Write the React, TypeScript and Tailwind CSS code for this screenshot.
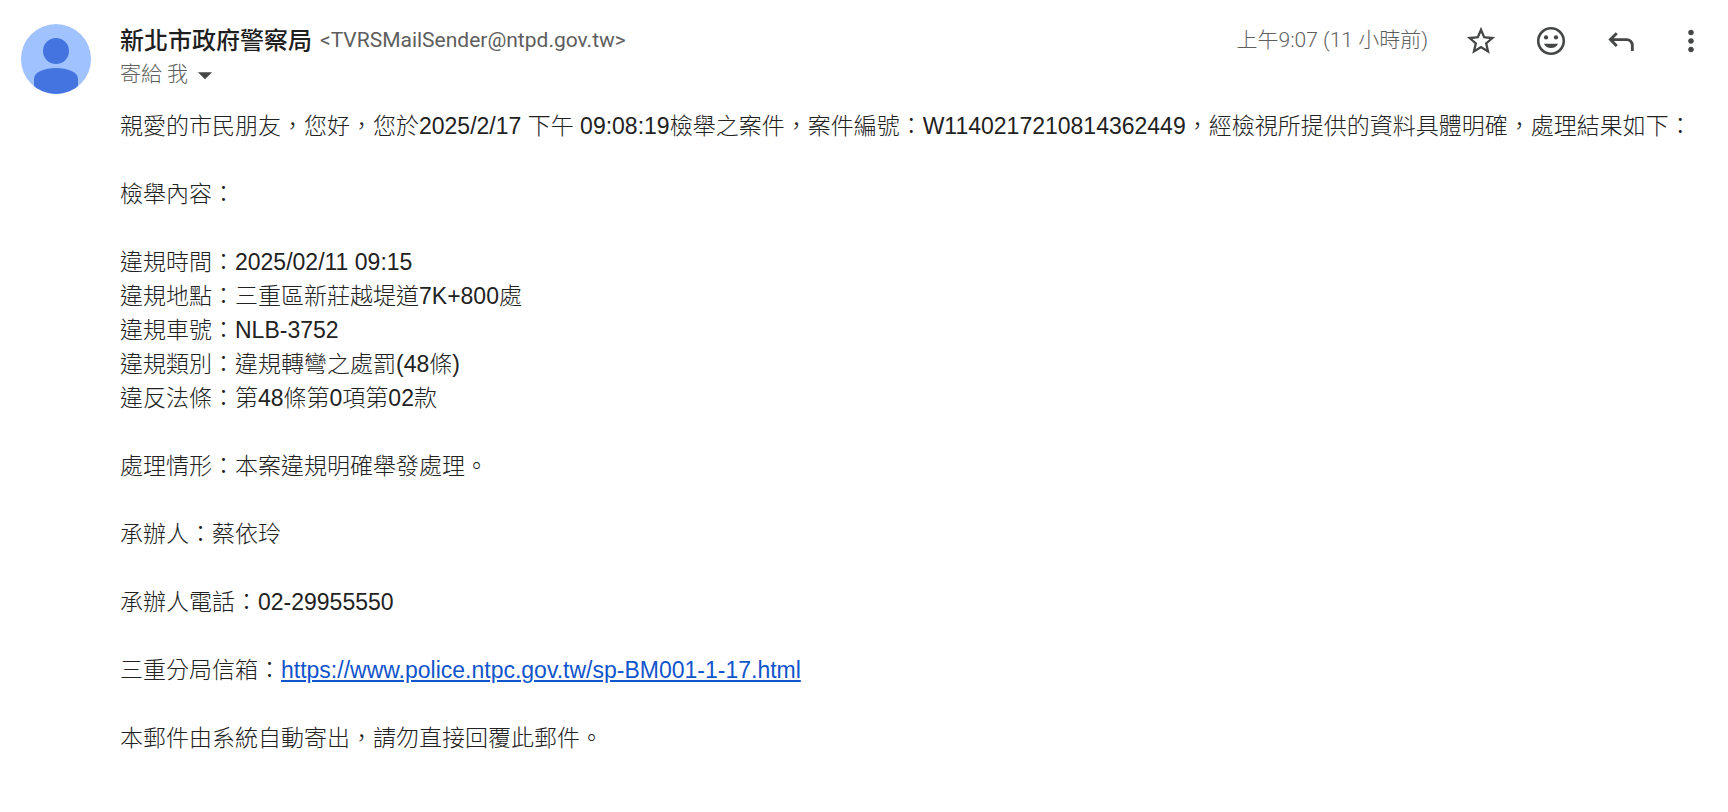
import { MdArrowDropDown, MdMoreVert, MdStarBorder } from "react-icons/md";

const report = [
	"違規時間：2025/02/11 09:15",
	"違規地點：三重區新莊越堤道7K+800處",
	"違規車號：NLB-3752",
	"違規類別：違規轉彎之處罰(48條)",
	"違反法條：第48條第0項第02款",
];

const Avatar = () => (
	<svg viewBox="0 0 70 70" className="size-[70px] shrink-0" aria-hidden="true">
		<clipPath id="avatar">
			<circle cx="35" cy="35" r="35" />
		</clipPath>
		<g clipPath="url(#avatar)">
			<rect width="70" height="70" fill="#a0c2ff" />
			<circle cx="35" cy="27" r="13" fill="#4374e0" />
			<path
				d="M13 70V55c0-7 10-11 22-11s22 4 22 11v15z"
				fill="#4374e0"
			/>
		</g>
	</svg>
);

const SmileIcon = () => (
	<svg viewBox="0 0 24 24" className="size-[34px]" fill="currentColor">
		<circle cx="12" cy="12" r="9" fill="none" stroke="currentColor" strokeWidth="1.8" />
		<circle cx="8.5" cy="9.5" r="1.5" />
		<circle cx="15.5" cy="9.5" r="1.5" />
		<path d="M7 14h10c-.8 1.900-2.700 3-5 3s-4.200-1.100-5-3z" />
	</svg>
);

const ReplyIcon = () => (
	<svg
		viewBox="0 0 24 24"
		className="size-[34px]"
		fill="none"
		stroke="currentColor"
		strokeWidth="2"
	>
		<path d="M9 6.500 4.500 11l4.500 4.500M4.500 11H16a4 4 0 0 1 4 4v4" />
	</svg>
);

const App = () => {
	return (
		<main className="min-h-screen bg-white flex gap-[29px] pt-6 pl-[21px] pr-5 font-light text-[#222222] font-['Liberation_Sans','Noto_Sans_CJK_TC',sans-serif]">
			<Avatar />
			<article className="flex-1 min-w-0">
				<header className="flex items-start justify-between font-['Roboto','Noto_Sans_CJK_TC',sans-serif] text-[21px]">
					<div className="text-[#5e5e5e]">
						<div className="flex items-center gap-2 h-[34px]">
							<h1 className="text-2xl font-medium text-[#1f1f1f]">新北市政府警察局</h1>
							<span className="font-normal">
								&lt;TVRSMailSender@ntpd.gov.tw&gt;
							</span>
						</div>
						<button type="button" className="flex items-center h-[34px] cursor-pointer">
							寄給 我
							<MdArrowDropDown className="text-[34px] text-[#444746]" />
						</button>
					</div>
					<div className="flex items-center gap-9 h-[34px] text-[#444746]">
						<time className="text-[#5e5e5e]">上午9:07 (11 小時前)</time>
						<button type="button" aria-label="加星號" className="cursor-pointer">
							<MdStarBorder className="size-[34px]" />
						</button>
						<button type="button" aria-label="新增表情回應" className="cursor-pointer">
							<SmileIcon />
						</button>
						<button type="button" aria-label="回覆" className="cursor-pointer">
							<ReplyIcon />
						</button>
						<button type="button" aria-label="更多" className="cursor-pointer">
							<MdMoreVert className="size-[34px]" />
						</button>
					</div>
				</header>

				<div className="flex flex-col gap-[34px] mt-[17px] text-[23px] leading-[34px]">
					<p>
						親愛的市民朋友，您好，您於2025/2/17 下午 09:08:19檢舉之案件，案件編號：W1140217210814362449，經檢視所提供的資料具體明確，處理結果如下：
					</p>
					<p>檢舉內容：</p>
					<div>
						{report.map((line) => (
							<p key={line}>{line}</p>
						))}
					</div>
					<p>處理情形：本案違規明確舉發處理。</p>
					<p>承辦人：蔡依玲</p>
					<p>承辦人電話：02-29955550</p>
					<p>
						三重分局信箱：
						<a
							href="https://www.police.ntpc.gov.tw/sp-BM001-1-17.html"
							className="text-[#1155cc] underline"
						>
							https://www.police.ntpc.gov.tw/sp-BM001-1-17.html
						</a>
					</p>
					<p>本郵件由系統自動寄出，請勿直接回覆此郵件。</p>
				</div>
			</article>
		</main>
	);
};

export default App;
